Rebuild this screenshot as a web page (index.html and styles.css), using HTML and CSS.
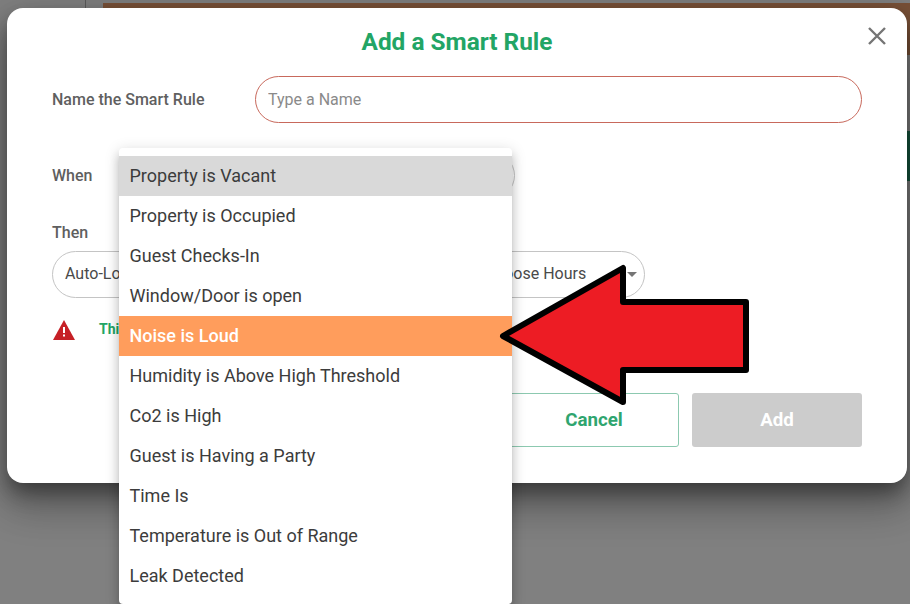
FILE: index.html
```html
<!DOCTYPE html>
<html lang="en">
<head>
    <meta charset="UTF-8">
    <meta name="viewport" content="width=device-width, initial-scale=1.0">
    <title>Add a Smart Rule</title>
    <link rel="stylesheet" href="styles.css">
</head>
<body>
    <div class="page-behind">
        <div class="top-rule"></div>
        <div class="banner"></div>
        <div class="band"></div>
    </div>

    <div class="modal">
        <h2 class="modal-title">Add a Smart Rule</h2>
        <button class="close-button" aria-label="Close">
            <svg width="18" height="18" viewBox="0 0 18 18"><path d="M1 1L17 17M17 1L1 17" stroke="#757575" stroke-width="2.4" fill="none"/></svg>
        </button>

        <div class="name-row">
            <label class="field-label name-label">Name the Smart Rule</label>
            <input class="name-input" type="text" placeholder="Type a Name">
        </div>

        <div class="when-row">
            <label class="field-label when-label">When</label>
            <div class="pill when-pill"></div>
        </div>

        <label class="field-label then-label">Then</label>
        <div class="then-row">
            <div class="pill lock-pill">Auto-Lock</div>
            <div class="pill hours-pill">
                <span>Choose Hours</span>
                <span class="caret"></span>
            </div>
        </div>

        <div class="warning-row">
            <svg class="warning-icon" width="22" height="20" viewBox="0 0 22 20">
                <path d="M11 0L22 20H0Z" fill="#c62026"/>
                <rect x="10" y="7" width="2" height="6" fill="#fff"/>
                <rect x="10" y="14.5" width="2" height="2" fill="#fff"/>
            </svg>
            <span class="warning-text">This</span>
        </div>

        <div class="actions">
            <button class="btn btn-cancel">Cancel</button>
            <button class="btn btn-add">Add</button>
        </div>
    </div>

    <ul class="menu">
        <li class="menu-item selected">Property is Vacant</li>
        <li class="menu-item">Property is Occupied</li>
        <li class="menu-item">Guest Checks-In</li>
        <li class="menu-item">Window/Door is open</li>
        <li class="menu-item active">Noise is Loud</li>
        <li class="menu-item">Humidity is Above High Threshold</li>
        <li class="menu-item">Co2 is High</li>
        <li class="menu-item">Guest is Having a Party</li>
        <li class="menu-item">Time Is</li>
        <li class="menu-item">Temperature is Out of Range</li>
        <li class="menu-item">Leak Detected</li>
    </ul>

    <svg class="arrow" width="254" height="144" viewBox="0 0 254 144">
        <path d="M4 72L124 4V38H247V106H124V138Z" fill="#ed1c24" stroke="#000" stroke-width="6" stroke-linejoin="round"/>
    </svg>
</body>
</html>
```

FILE: styles.css
```css
html, body {
    height: 100%;
}
body {
    margin: 0;
    overflow: hidden;
    background-color: #808080;
    font-family: Roboto, sans-serif;
}
.page-behind {
    height: 100%;
}
.top-rule {
    position: absolute;
    left: 85px;
    top: 0;
    width: 1px;
    height: 8px;
    background-color: #5c5c5c;
}
.banner {
    margin: 3px 0 0 103px;
    height: 52px;
    background-color: #7a5238;
}
.band {
    margin: 76px 0 0 103px;
    height: 50px;
    background-color: #17573f;
}
.modal {
    position: absolute;
    left: 7px;
    top: 8px;
    width: 900px;
    height: 475px;
    box-sizing: border-box;
    padding: 19px 45px 0;
    background-color: white;
    border-radius: 16px;
    box-shadow: 0 11px 20px -2px rgba(0, 0, 0, 0.4), 0 24px 38px 3px rgba(0, 0, 0, 0.2), 0 9px 46px 8px rgba(0, 0, 0, 0.12);
}
.modal-title {
    margin: 0;
    font-size: 24.4px;
    line-height: 30px;
    font-weight: 700;
    text-align: center;
    color: #22a565;
}
.close-button {
    position: absolute;
    right: 21px;
    top: 19px;
    padding: 0;
    border: none;
    background: none;
    line-height: 0;
}
.field-label {
    font-size: 16px;
    font-weight: 500;
    color: #5f5f5f;
}
.name-row {
    display: flex;
    align-items: center;
    margin-top: 19px;
}
.name-label {
    width: 203px;
}
.name-input {
    width: 607px;
    height: 47px;
    box-sizing: border-box;
    padding: 0 12px;
    border: 1px solid #c8695c;
    border-radius: 24px;
    font-family: Roboto, sans-serif;
    font-size: 16px;
    outline: none;
}
.name-input::placeholder {
    color: #8a8a8a;
}
.pill {
    display: flex;
    align-items: center;
    height: 47px;
    box-sizing: border-box;
    padding: 0 12px 2px;
    border: 1px solid #c4c4c4;
    border-radius: 24px;
    font-size: 16px;
    color: #4a4a4a;
}
.when-row {
    display: flex;
    align-items: center;
    margin-top: 29px;
}
.when-label {
    width: 67px;
}
.when-pill {
    width: 396px;
}
.then-label {
    display: block;
    margin-top: 24px;
    line-height: 18px;
    padding-top: 1px;
}
.then-row {
    display: flex;
    gap: 12px;
    margin-top: 9px;
}
.lock-pill {
    width: 290px;
}
.hours-pill {
    width: 291px;
    justify-content: space-between;
    padding-left: 130px;
}
.caret {
    width: 0;
    height: 0;
    margin: 2px -5px 0 0;
    border-left: 5px solid transparent;
    border-right: 5px solid transparent;
    border-top: 5px solid #757575;
}
.warning-row {
    display: flex;
    align-items: center;
    gap: 24px;
    margin-top: 22px;
    padding-left: 1px;
}
.warning-text {
    margin-top: -3px;
    font-size: 14px;
    font-weight: 700;
    color: #22a565;
}
.actions {
    display: flex;
    justify-content: flex-end;
    gap: 13px;
    margin-top: 53px;
}
.btn {
    width: 170px;
    height: 54px;
    padding: 0 0 1px;
    border-radius: 3px;
    font-family: Roboto, sans-serif;
    font-size: 18.7px;
    font-weight: 700;
}
.btn-cancel {
    background-color: white;
    border: 1px solid #8cc9b0;
    color: #2fa56f;
}
.btn-add {
    background-color: #cccccc;
    border: none;
    color: white;
}
.menu {
    position: absolute;
    left: 119px;
    top: 148px;
    width: 393px;
    margin: 0;
    padding: 8px 0;
    list-style: none;
    background-color: white;
    border-radius: 4px;
    box-shadow: 0 5px 5px -3px rgba(0, 0, 0, 0.2), 0 8px 10px 1px rgba(0, 0, 0, 0.14), 0 3px 14px 2px rgba(0, 0, 0, 0.12);
}
.menu-item {
    height: 40px;
    padding-left: 10.5px;
    font-size: 18px;
    line-height: 40px;
    color: #3c3c3c;
}
.menu-item.selected {
    background-color: #d9d9d9;
}
.menu-item.active {
    background-color: #ff9d5c;
    color: white;
    font-weight: 500;
}
.arrow {
    position: absolute;
    left: 499px;
    top: 264px;
}
```
